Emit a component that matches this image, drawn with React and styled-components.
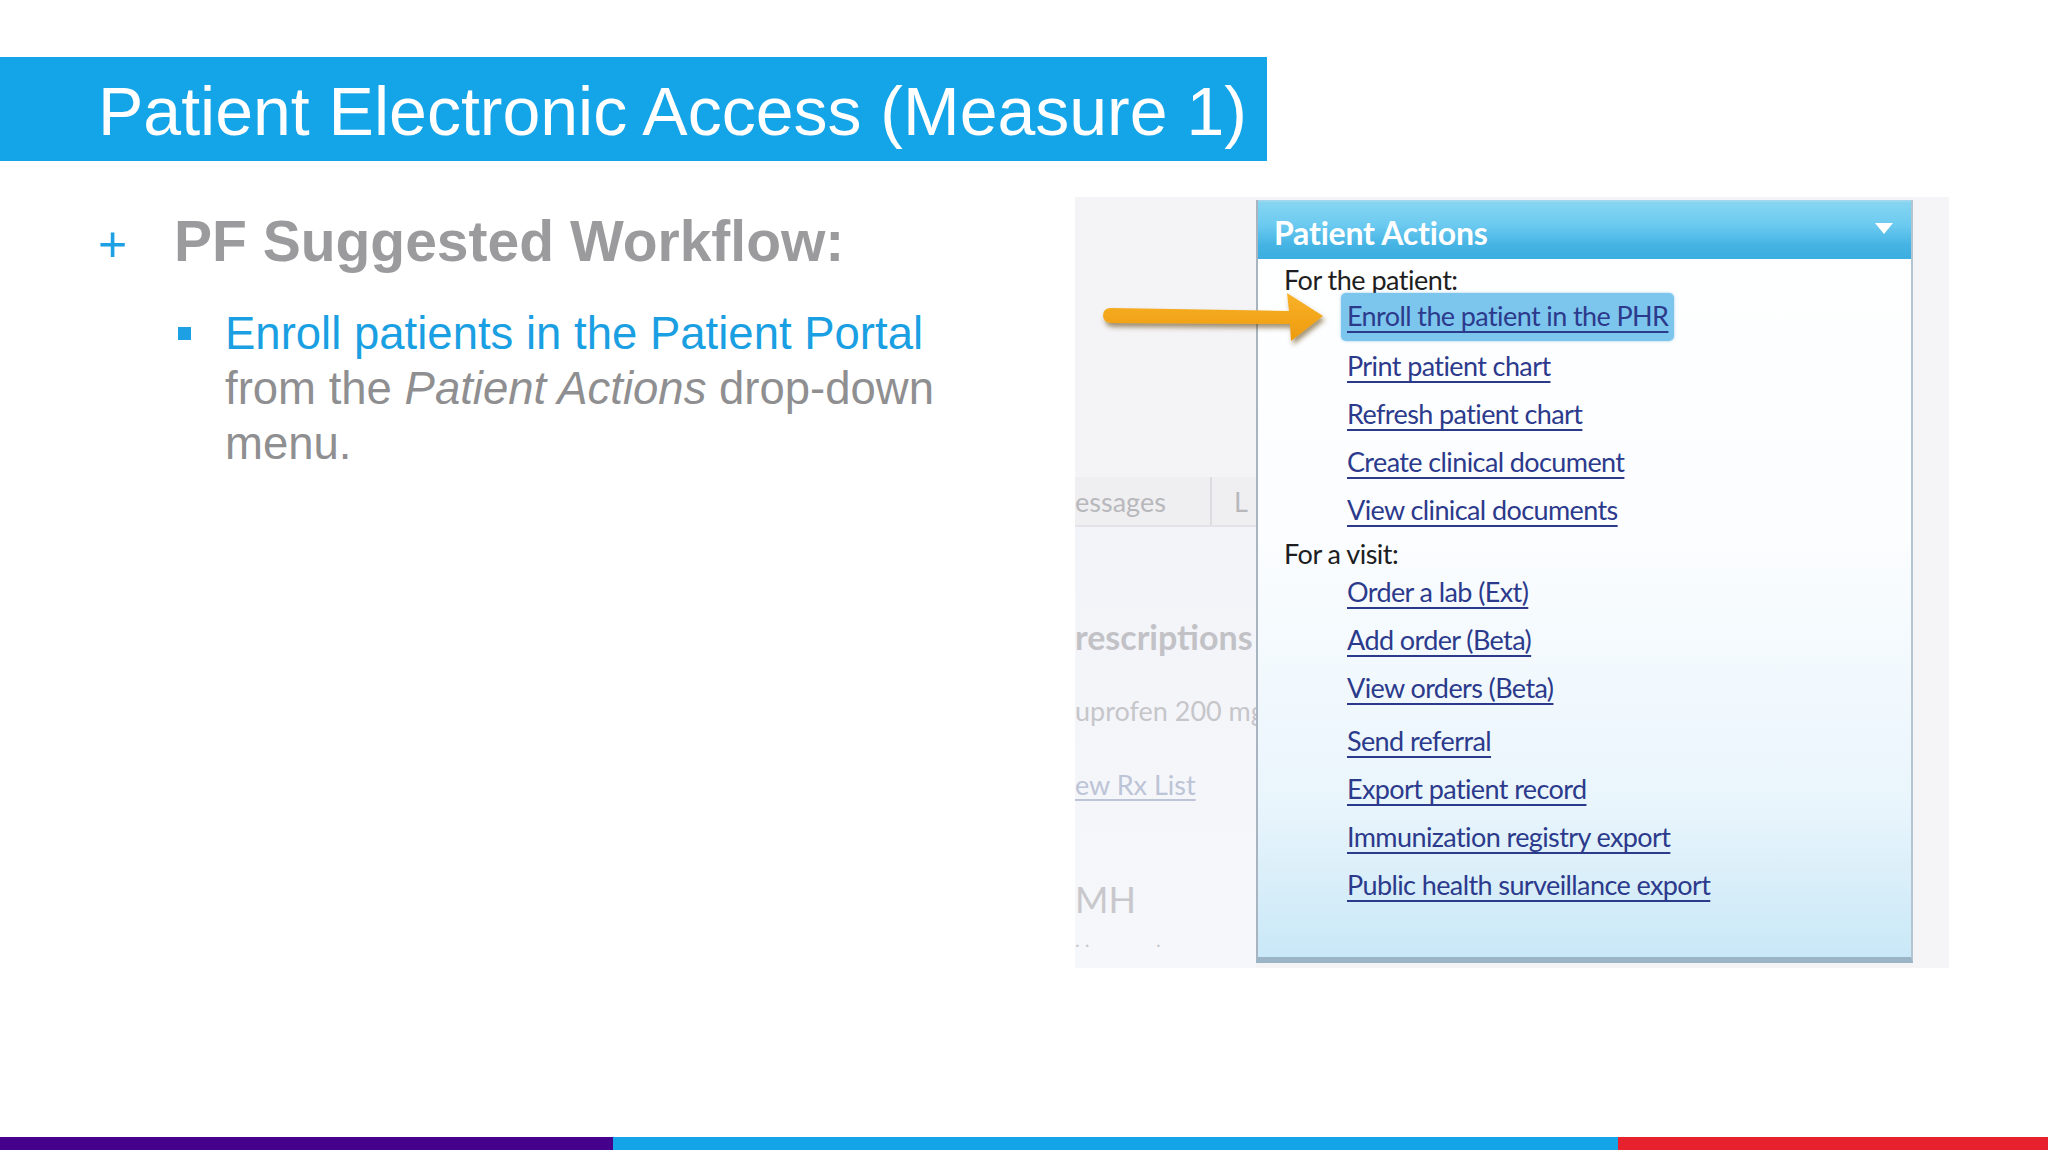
import React from "react";
import styled, { createGlobalStyle } from "styled-components";

const Global = createGlobalStyle`
  html, body { margin: 0; padding: 0; background: #ffffff; }
  body { font-family: "Liberation Sans", Arial, sans-serif; }
`;

const Page = styled.div`
  width: 2048px;
  height: 1152px;
  display: flex;
  flex-direction: column;
  background: #ffffff;
  overflow: hidden;
`;

const TitleBar = styled.div`
  margin-top: 57px;
  width: 1267px;
  height: 104px;
  box-sizing: border-box;
  padding-left: 98px;
  padding-top: 4px;
  display: flex;
  align-items: center;
  background: #14a4e8;
  color: #ffffff;
  font-family: "Liberation Sans", Arial, sans-serif;
  font-size: 68px;
  white-space: nowrap;
`;

const Content = styled.div`
  display: flex;
  margin-top: 36px;
`;

const TextColumn = styled.div`
  width: 1075px;
  flex: none;
  box-sizing: border-box;
  padding-left: 98px;
  padding-top: 11px;
`;

const Heading = styled.div`
  display: flex;
  align-items: baseline;
  font-family: "Liberation Sans", Arial, sans-serif;
  font-size: 57px;
  line-height: 67px;
`;

const Plus = styled.span`
  width: 76px;
  color: #1ea0e4;
  font-size: 50px;
`;

const HeadingText = styled.span`
  color: #9b9b9d;
  font-weight: bold;
`;

const BulletRow = styled.div`
  display: flex;
  margin-top: 28px;
  padding-left: 80px;
`;

const Square = styled.span`
  width: 13px;
  height: 13px;
  margin-top: 21px;
  margin-right: 34px;
  background: #1ea0e4;
  flex: none;
`;

const BulletText = styled.div`
  width: 730px;
  font-family: "Liberation Sans", Arial, sans-serif;
  font-size: 45.5px;
  line-height: 55px;
  color: #8f8f91;
`;

const Blue = styled.span`
  color: #1a9fe2;
`;

const Shot = styled.div`
  position: relative;
  width: 874px;
  height: 771px;
  flex: none;
  display: flex;
  background: #f4f4f6;
  font-family: Lato, "Open Sans", sans-serif;
`;

const BackApp = styled.div`
  width: 181px;
  flex: none;
  display: flex;
  flex-direction: column;
  overflow: hidden;
  background: #f3f3f5;
  color: #c4c4c8;
  white-space: nowrap;
`;

const BackTop = styled.div`
  height: 280px;
  background: #f4f3f5;
`;

const Tabs = styled.div`
  height: 48px;
  display: flex;
  align-items: center;
  background: #efeff1;
  border-bottom: 2px solid #e4e4e8;
  font-size: 27px;
  color: #b8b8bc;
`;

const Tab = styled.span`
  width: 137px;
  height: 100%;
  display: flex;
  align-items: center;
  border-right: 2px solid #dcdce0;
  box-sizing: border-box;
`;

const TabNext = styled.span`
  padding-left: 22px;
`;

const BackBody = styled.div`
  flex: 1;
  background: linear-gradient(#f2f4f9, #f6f7fa);
  display: flex;
  flex-direction: column;
`;

const BackLine = styled.div`
  height: ${(p) => p.h}px;
  display: flex;
  align-items: flex-end;
  font-size: ${(p) => p.size}px;
  font-weight: ${(p) => (p.bold ? 700 : 400)};
  color: ${(p) => p.color || "#c6c6ca"};
  text-decoration: ${(p) => (p.link ? "underline" : "none")};
  text-underline-offset: 4px;
`;

const Dropdown = styled.div`
  width: 657px;
  flex: none;
  margin-top: 3px;
  height: 763px;
  box-sizing: border-box;
  display: flex;
  flex-direction: column;
  border-left: 2px solid #a8b4c0;
  border-right: 2px solid #b4c4d0;
  border-bottom: 6px solid #9bb4c6;
  background: linear-gradient(#ffffff 0%, #fbfdff 45%, #e9f5fc 80%, #c9e8f7 100%);
`;

const DropHeader = styled.div`
  height: 59px;
  flex: none;
  box-sizing: border-box;
  display: flex;
  align-items: center;
  justify-content: space-between;
  padding: 4px 18px 0 16px;
  background: linear-gradient(#86d6f2 0%, #6ccaf0 40%, #45b4e4 75%, #3cade0 100%);
  border-top: 2px solid #9fd8ee;
  color: #ffffff;
  font-size: 32px;
  font-weight: 700;
  letter-spacing: -0.2px;
`;

const Caret = styled.span`
  width: 0;
  height: 0;
  border-left: 9px solid transparent;
  border-right: 9px solid transparent;
  border-top: 11px solid #ffffff;
  margin-top: -8px;
`;

const DropBody = styled.div`
  padding-top: 6px;
  display: flex;
  flex-direction: column;
`;

const Label = styled.div`
  height: ${(p) => p.h}px;
  box-sizing: border-box;
  padding-top: ${(p) => p.pt || 0}px;
  display: flex;
  align-items: center;
  padding-left: 26px;
  color: #1e1e22;
  font-size: 27px;
  letter-spacing: -0.5px;
`;

const LinkRow = styled.div`
  height: 48px;
  margin-top: ${(p) => p.gap || 0}px;
  display: flex;
  align-items: center;
  padding-left: 89px;
`;

const Link = styled.a`
  color: #2c3a8c;
  font-size: 27px;
  letter-spacing: -0.6px;
  text-decoration: underline;
  text-decoration-thickness: 2px;
  text-underline-offset: 5px;
  white-space: nowrap;
  cursor: pointer;
  ${(p) =>
    p.active &&
    `
    background: #7cc6ee;
    border-radius: 5px;
    padding: 6px 6px 9px;
    margin-left: -6px;
    box-shadow: 0 0 3px rgba(90,170,220,0.6);
  `}
`;

const RightStrip = styled.div`
  flex: 1;
  background: #f5f5f7;
`;

const ArrowBox = styled.svg`
  position: absolute;
  left: 26px;
  top: 94px;
  overflow: visible;
`;

const Footer = styled.div`
  margin-top: auto;
  margin-bottom: 2px;
  height: 13px;
  display: flex;
`;

const FootSeg = styled.div`
  width: ${(p) => p.w}px;
  flex: ${(p) => (p.w ? "none" : 1)};
  background: ${(p) => p.c};
`;

const patientLinks = [
  "Enroll the patient in the PHR",
  "Print patient chart",
  "Refresh patient chart",
  "Create clinical document",
  "View clinical documents",
];

const visitLinks = [
  "Order a lab (Ext)",
  "Add order (Beta)",
  "View orders (Beta)",
  "Send referral",
  "Export patient record",
  "Immunization registry export",
  "Public health surveillance export",
];

export default function App() {
  return (
    <>
      <Global />
      <Page>
        <TitleBar>Patient Electronic Access (Measure 1)</TitleBar>
        <Content>
          <TextColumn>
            <Heading>
              <Plus>+</Plus>
              <HeadingText>PF Suggested Workflow:</HeadingText>
            </Heading>
            <BulletRow>
              <Square />
              <BulletText>
                <Blue>Enroll patients in the Patient Portal</Blue> from the{" "}
                <i>Patient Actions</i> drop-down menu.
              </BulletText>
            </BulletRow>
          </TextColumn>
          <Shot>
            <BackApp>
              <BackTop />
              <Tabs>
                <Tab>essages</Tab>
                <TabNext>L</TabNext>
              </Tabs>
              <BackBody>
                <BackLine h={130} size={34} bold color="#c2c2c6">
                  rescriptions
                </BackLine>
                <BackLine h={70} size={27}>
                  uprofen 200 mg
                </BackLine>
                <BackLine h={74} size={27} link color="#bcc4d6">
                  ew Rx List
                </BackLine>
                <BackLine h={120} size={36} color="#c8c8cc">
                  MH
                </BackLine>
                <BackLine h={30} size={20} color="#c8c8cc">
                  . . &nbsp; &nbsp; &nbsp; &nbsp; &nbsp; &nbsp; .
                </BackLine>
              </BackBody>
            </BackApp>
            <Dropdown>
              <DropHeader>
                <span>Patient Actions</span>
                <Caret />
              </DropHeader>
              <DropBody>
                <Label h={28}>For the patient:</Label>
                {patientLinks.map((t, i) => (
                  <LinkRow key={t}>
                    <Link active={i === 0}>{t}</Link>
                  </LinkRow>
                ))}
                <Label h={34} pt={7}>For a visit:</Label>
                {visitLinks.map((t, i) => (
                  <LinkRow key={t} gap={i === 3 ? 5 : 0}>
                    <Link>{t}</Link>
                  </LinkRow>
                ))}
              </DropBody>
            </Dropdown>
            <RightStrip />
            <ArrowBox width="226" height="56" viewBox="0 0 226 56">
              <defs>
                <filter id="sh" x="-10%" y="-30%" width="130%" height="180%">
                  <feDropShadow dx="2" dy="4" stdDeviation="2.5" floodColor="#5a3a00" floodOpacity="0.55" />
                </filter>
                <linearGradient id="og" x1="0" y1="0" x2="0" y2="1">
                  <stop offset="0" stopColor="#f8b22a" />
                  <stop offset="1" stopColor="#ee9a0c" />
                </linearGradient>
              </defs>
              <path
                filter="url(#sh)"
                fill="url(#og)"
                d="M10 17 L188 20 L186 2 L222 25 L190 50 L189 33 L10 32 Q2 31 2 24.5 Q2 17 10 17 Z"
              />
            </ArrowBox>
          </Shot>
        </Content>
        <Footer>
          <FootSeg w={613} c="#45008c" />
          <FootSeg w={1005} c="#14a4e8" />
          <FootSeg c="#e8212e" />
        </Footer>
      </Page>
    </>
  );
}
